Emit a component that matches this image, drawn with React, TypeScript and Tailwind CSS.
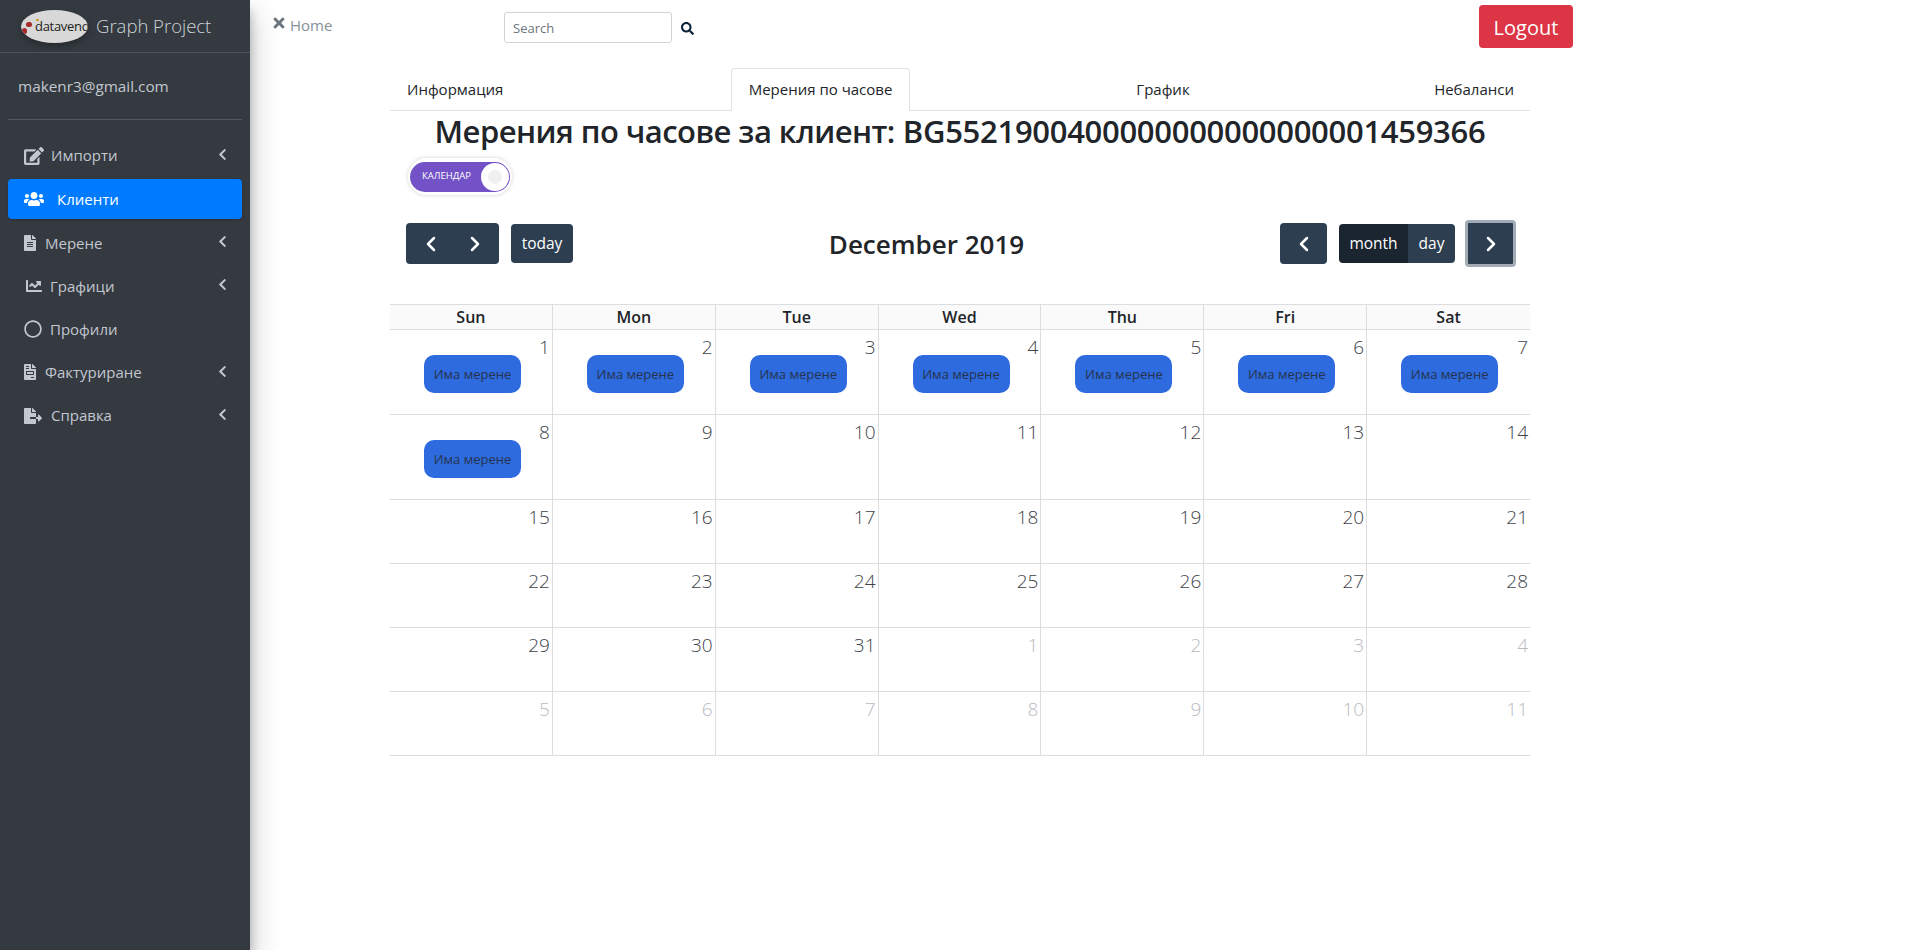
import { ChevronLeft, ChevronRight } from "lucide-react";
import {
  FaChartLine,
  FaChevronLeft,
  FaEdit,
  FaFileAlt,
  FaFileExport,
  FaFileInvoice,
  FaRegCircle,
  FaSearch,
  FaTimes,
  FaUsers,
} from "react-icons/fa";

const days = ["Sun", "Mon", "Tue", "Wed", "Thu", "Fri", "Sat"];

const rows = [
  { h: "h-[85px]", cells: [1, 2, 3, 4, 5, 6, 7] },
  { h: "h-[85px]", cells: [8, 9, 10, 11, 12, 13, 14] },
  { h: "h-16", cells: [15, 16, 17, 18, 19, 20, 21] },
  { h: "h-16", cells: [22, 23, 24, 25, 26, 27, 28] },
  { h: "h-16", cells: [29, 30, 31, -1, -2, -3, -4] },
  { h: "h-16", cells: [-5, -6, -7, -8, -9, -10, -11] },
];

function NavItem({ icon, label, gap, arrow = true }: { icon: React.ReactNode; label: string; gap: string; arrow?: boolean }) {
  return (
    <div className="flex h-[43.2px] items-center pl-[24px] pr-[23px] text-[15px] text-[#c2c7d0]">
      <span className="flex items-center">{icon}</span>
      <span className={gap}>{label}</span>
      {arrow && <FaChevronLeft className="ml-auto h-[13px] w-[9px] -translate-y-px" />}
    </div>
  );
}

function Sidebar() {
  return (
    <aside className="flex h-[950px] w-[250px] shrink-0 flex-col bg-[#343a40] shadow-[0_14px_28px_rgba(0,0,0,0.25),0_10px_10px_rgba(0,0,0,0.22)]">
      <div className="flex h-[53px] items-center border-b border-[#4b545c] pl-[21px]">
        <div className="relative h-[33px] w-[67px] overflow-hidden rounded-[50%] bg-[#d8d8d8] shadow-[0_3px_6px_rgba(0,0,0,0.3)]">
          <span className="absolute left-[5px] top-[12px] h-[5px] w-[6px] rounded-full bg-[#a52a2a]" />
          <span className="absolute left-[1px] top-[18px] h-[6px] w-[5px] rounded-full bg-[#a52a2a]" />
          <span className="absolute left-[15px] top-[9px] h-[2px] w-[3px] bg-[#d99a3c]" />
          <span className="absolute left-[14px] top-[7px] text-[13px] leading-[18px] tracking-[-0.3px] text-[#222]">datavend</span>
        </div>
        <span className="ml-2 text-[18.5px] font-light text-[#ced4da]">Graph Project</span>
      </div>
      <div className="mx-2 flex h-[67px] items-center border-b border-[#4f5962] pl-[10px] text-[15.3px] text-[#c2c7d0]">
        makenr3@gmail.com
      </div>
      <nav className="mt-[14px] flex flex-col">
        <NavItem icon={<FaEdit className="h-[18px] w-[20px]" />} label="Импорти" gap="ml-[7px]" />
        <div className="mx-2 my-[2px] flex h-10 items-center rounded-[4px] bg-[#007bff] pl-4 text-[15px] text-white shadow-[0_1px_3px_rgba(0,0,0,0.2)]">
          <FaUsers className="h-4 w-5" />
          <span className="ml-[13px]">Клиенти</span>
        </div>
        <NavItem icon={<FaFileAlt className="h-4 w-3" />} label="Мерене" gap="ml-[9px]" />
        <NavItem icon={<FaChartLine className="h-[16px] w-[20px]" />} label="Графици" gap="ml-[6px]" />
        <NavItem icon={<FaRegCircle className="h-[18px] w-[18px]" />} label="Профили" gap="ml-[8px]" arrow={false} />
        <NavItem icon={<FaFileInvoice className="h-4 w-3" />} label="Фактуриране" gap="ml-[9px]" />
        <NavItem icon={<FaFileExport className="h-4 w-[18px]" />} label="Справка" gap="ml-[9px]" />
      </nav>
    </aside>
  );
}

function TopBar() {
  return (
    <div className="flex h-[68px] items-start pl-[23px]">
      <div className="flex w-[231px] items-center pt-[14px] text-[15px] text-[#869099]">
        <FaTimes className="mb-[4px] h-4 w-3 text-[#6c757d]" />
        <span className="ml-[5px]">Home</span>
      </div>
      <div className="mt-3 flex h-[31px] w-[168px] items-center rounded-[3px] border border-[#ced4da] pl-2 pt-[2px] text-[13px] text-[#6c757d]">
        Search
      </div>
      <FaSearch className="ml-[9px] mt-[22px] h-[13px] w-[13px] text-[#0b2135]" />
      <button className="ml-[785px] mt-[5px] h-[43px] w-[94px] rounded-[4px] bg-[#dc3545] pt-[2px] text-[20px] text-white">Logout</button>
    </div>
  );
}

function Tabs() {
  return (
    <div className="flex h-[43px] border-b border-[#dee2e6] text-[15px] text-[#212529]">
      <div className="flex w-[341px] items-center pl-[17px]">Информация</div>
      <div className="mb-[-1px] flex w-[179px] items-center justify-center rounded-t-[4px] border border-[#dee2e6] border-b-white">
        Мерения по часове
      </div>
      <div className="flex w-[506px] items-center justify-center">График</div>
      <div className="flex flex-1 items-center justify-end pr-4">Небаланси</div>
    </div>
  );
}

function Toggle() {
  return (
    <div className="ml-[18px] mt-[4px] flex h-[37px] w-[104px] items-center justify-center rounded-full bg-white shadow-[0_0_4px_rgba(0,0,0,0.18)]">
      <div className="flex h-[30px] w-[100px] items-center justify-between rounded-full bg-[#7352c7] pl-3 pr-px">
        <span className="text-[9.5px] font-medium text-white">КАЛЕНДАР</span>
        <span className="flex h-[28px] w-[28px] items-center justify-center rounded-full bg-white">
          <span className="h-[14px] w-[14px] rounded-full bg-[#f0f0f0]" />
        </span>
      </div>
    </div>
  );
}

function Toolbar() {
  const btn = "flex items-center justify-center rounded-[4px] bg-[#2c3e50] text-white";
  return (
    <div className="mt-[28px] flex h-[41px] items-center pl-[16px] pr-[14px]">
      <div className={`${btn} h-[41px] w-[93px] gap-[20px]`}>
        <ChevronLeft className="h-6 w-6" strokeWidth={2.5} />
        <ChevronRight className="h-6 w-6" strokeWidth={2.5} />
      </div>
      <div className={`${btn} ml-3 h-[39px] w-[62px] text-[15.5px]`}>today</div>
      <div className="flex-1 pt-[2px] text-center text-[26px] font-semibold text-[#212529]">December 2019</div>
      <div className={`${btn} h-[41px] w-[47px]`}>
        <ChevronLeft className="h-6 w-6" strokeWidth={2.5} />
      </div>
      <div className="ml-3 flex h-[39px] overflow-hidden rounded-[4px] text-[15.5px] text-white">
        <div className="flex w-[69px] items-center justify-center bg-[#1a252f]">month</div>
        <div className="flex w-[47px] items-center justify-center bg-[#2c3e50]">day</div>
      </div>
      <div className={`${btn} ml-[10px] h-[47px] w-[51px] border-[3px] border-[#a3acb5]`}>
        <ChevronRight className="h-6 w-6" strokeWidth={2.5} />
      </div>
    </div>
  );
}

function Calendar() {
  return (
    <div className="mt-[40px] border-t border-[#ddd] text-[#212529]">
      <div className="grid h-[25px] grid-cols-7 border-b border-[#ddd] bg-[#fafafa]">
        {days.map((d, i) => (
          <div key={d} className={`flex items-center justify-center text-[16px] font-semibold ${i < 6 ? "border-r border-[#ddd]" : ""}`}>
            {d}
          </div>
        ))}
      </div>
      {rows.map((row, ri) => (
        <div key={ri} className={`grid grid-cols-7 border-b border-[#ddd] ${row.h}`}>
          {row.cells.map((n, i) => (
            <div key={n} className={`${i < 6 ? "border-r border-[#ddd]" : ""}`}>
              <div className={`pr-[2px] pt-[4px] text-right text-[19px] font-light leading-[27px] ${n < 0 ? "text-[#b9bcbf]" : "text-[#3d4349]"}`}>
                {Math.abs(n)}
              </div>
              {n > 0 && n < 9 && (
                <div className="ml-[34px] mt-[-6px] flex h-[38px] w-[97px] items-center justify-center rounded-[10px] bg-[#2d6bdf] pt-[2px] text-[13px] text-[#27334d]">
                  Има мерене
                </div>
              )}
            </div>
          ))}
        </div>
      ))}
    </div>
  );
}

export default function App() {
  return (
    <div className="flex h-[950px] overflow-hidden bg-white font-['Open_Sans','Noto_Sans',sans-serif]">
      <Sidebar />
      <main className="flex-1">
        <TopBar />
        <div className="ml-[140px] w-[1140px]">
          <Tabs />
          <h1 className="h-[43px] text-center text-[31px] font-semibold leading-[41px] text-[#212529]">
            <span className="tracking-[-0.55px]">Мерения по часове за клиент:</span>{" "}
            <span className="tracking-[-0.3px]">BG5521900400000000000000001459366</span>
          </h1>
          <Toggle />
          <Toolbar />
          <Calendar />
        </div>
      </main>
    </div>
  );
}
